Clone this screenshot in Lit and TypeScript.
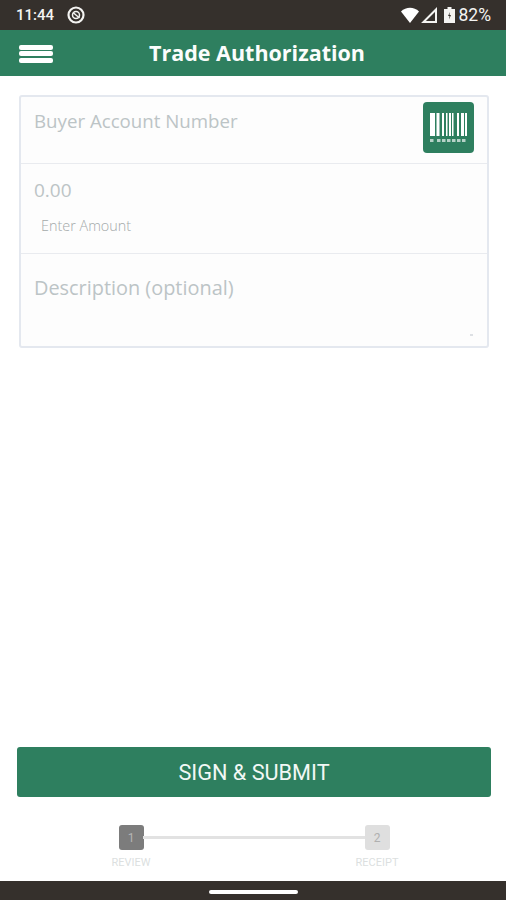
import {css, html, LitElement, svg} from "lit";
import {customElement} from "lit/decorators.js";

// barcode bars: [x, width]
const BARS: [number, number][] = [
  [0, 5], [6.5, 3], [12, 2], [16, 1.5], [19, 2], [22, 1.5], [27, 2], [31, 3], [35, 2],
];
const DOTS = [0, 7, 12, 17, 22, 27, 32];

@customElement("app-root")
export class AppRoot extends LitElement {
  static styles = css`
    :host {
      display: flex;
      flex-direction: column;
      width: 506px;
      height: 900px;
      background: #fff;
      font-family: "Open Sans", sans-serif;
      overflow: hidden;
    }

    .status {
      flex: none;
      height: 30px;
      background: #35302c;
      color: #f4f4f2;
      display: flex;
      align-items: center;
      padding: 0 15px 0 16px;
      font-family: Roboto, sans-serif;
      font-size: 15px;
      font-weight: 500;
    }

    .status .dnd {
      margin-left: 13px;
    }

    .status .right {
      margin-left: auto;
      display: flex;
      align-items: center;
    }

    .status .tri {
      margin-left: 2px;
    }

    .status .batt {
      margin-left: 7px;
    }

    .status .pct {
      margin-left: 4px;
      font-size: 17.5px;
      font-weight: 400;
    }

    .appbar {
      flex: none;
      height: 46px;
      background: #2e7f5f;
      display: flex;
      align-items: center;
      padding: 0 19px;
      box-sizing: border-box;
    }

    .burger {
      display: flex;
      flex-direction: column;
      gap: 1.5px;
      width: 34px;
      margin-top: 1px;
    }

    .burger span {
      height: 5px;
      background: #fff;
      border-radius: 2px;
    }

    .title {
      flex: 1;
      text-align: center;
      color: #fbfdfc;
      font-size: 21.5px;
      font-weight: 700;
      margin: -1px 0 0 -26px;
    }

    .card {
      flex: none;
      margin: 19px 17px 0 19px;
      height: 253px;
      box-sizing: border-box;
      border: 2px solid #e4e8ef;
      border-radius: 3px;
      background: #fdfdfd;
      display: flex;
      flex-direction: column;
    }

    .row {
      box-sizing: border-box;
      border-bottom: 1px solid #e9ebef;
      padding: 0 13px;
      color: #bcc4c6;
    }

    .row.account {
      height: 67px;
      display: flex;
      justify-content: space-between;
      padding-top: 5px;
      padding-right: 13px;
      font-size: 18.7px;
    }

    .row.account .label {
      margin-top: 6px;
    }

    .scan {
      width: 51px;
      height: 51px;
      background: #2e7f5f;
      border-radius: 4px;
      display: flex;
      align-items: center;
      justify-content: center;
    }

    .row.amount {
      height: 90px;
      padding-top: 13px;
      font-size: 19px;
    }

    .hint {
      margin: 13px 0 0 7px;
      color: #a4a9aa;
      font-size: 14.4px;
      font-weight: 300;
    }

    .row.desc {
      flex: 1;
      border-bottom: 0;
      padding-top: 20px;
      font-size: 19.9px;
      position: relative;
    }

    .grip {
      position: absolute;
      right: 14px;
      bottom: 10px;
      width: 3px;
      height: 2px;
      background: #dde0e4;
    }

    .spacer {
      flex: 1;
    }

    .submit {
      flex: none;
      margin: 0 15px 0 17px;
      height: 50px;
      border: 0;
      border-radius: 3px;
      background: #2e7f5f;
      color: #f2f8f5;
      font-family: Roboto, sans-serif;
      font-size: 21.7px;
      padding: 0;
    }

    .steps {
      flex: none;
      margin-top: 28px;
      height: 56px;
      padding: 0 97px 0 99px;
      display: grid;
      grid-template-columns: 64px 1fr 64px;
      grid-template-rows: 25px 1fr;
      justify-items: center;
      align-items: center;
    }

    .step {
      width: 25px;
      height: 25px;
      border-radius: 3px;
      display: flex;
      align-items: center;
      justify-content: center;
      font-family: Roboto, sans-serif;
      font-size: 12px;
    }

    .step.on {
      background: #7c7c7c;
      color: #b5b5b5;
    }

    .step.off {
      background: #dfdfdf;
      color: #b0b0b0;
    }

    .line {
      justify-self: stretch;
      height: 3px;
      margin: 0 -20px;
      background: #e2e2e2;
    }

    .cap {
      grid-row: 2;
      align-self: start;
      margin-top: 6px;
      color: #dcdfdf;
      font-family: Roboto, sans-serif;
      font-size: 11px;
    }

    .cap.second {
      grid-column: 3;
    }

    .nav {
      flex: none;
      height: 19px;
      background: #35302c;
      display: flex;
      align-items: center;
      justify-content: center;
    }

    .nav span {
      width: 89px;
      height: 4px;
      margin-top: 2px;
      background: #fff;
      border-radius: 2px;
    }
  `;

  private renderBarcode() {
    return html`
      <svg width="37" height="30" viewBox="0 0 37 30" fill="#fff">
        ${BARS.map(([x, w]) => svg`<rect x=${x} y="0" width=${w} height="23"></rect>`)}
        ${DOTS.map((x) => svg`<rect x=${x} y="26" width="3.500" height="3" opacity="0.65"></rect>`)}
      </svg>
    `;
  }

  render() {
    return html`
      <div class="status">
        <span>11:44</span>
        <svg class="dnd" width="18" height="18" viewBox="0 0 18 18" fill="none" stroke="#f4f4f2">
          <circle cx="9" cy="9" r="7.500" stroke-width="2.200"></circle>
          <circle cx="9" cy="9" r="3.500" stroke-width="1.500"></circle>
          <path d="M6 6.500 12.500 12" stroke-width="1.500"></path>
        </svg>
        <div class="right">
          <svg width="18" height="16" viewBox="0 0 18 16">
            <path d="M0 4.500C5-.5 13-.5 18 4.500L9 16Z" fill="#fff"></path>
          </svg>
          <svg class="tri" width="16" height="16" viewBox="0 0 16 16" fill="none" stroke="#f4f4f2" stroke-width="2">
            <path d="M15 2.500V15H2.500Z"></path>
          </svg>
          <svg class="batt" width="11" height="16" viewBox="0 0 11 16">
            <path d="M3.500 0H7.500V2H11V16H0V2H3.500Z" fill="#f4f4f2"></path>
            <path d="M6 5 4 9H5.500L5 12.500 7 8H5.500Z" fill="#35302c"></path>
          </svg>
          <span class="pct">82%</span>
        </div>
      </div>

      <div class="appbar">
        <div class="burger"><span></span><span></span><span></span></div>
        <div class="title">Trade Authorization</div>
      </div>

      <div class="card">
        <div class="row account">
          <div class="label">Buyer Account Number</div>
          <div class="scan">${this.renderBarcode()}</div>
        </div>
        <div class="row amount">
          <div>0.00</div>
          <div class="hint">Enter Amount</div>
        </div>
        <div class="row desc">Description (optional)<span class="grip"></span></div>
      </div>

      <div class="spacer"></div>

      <button class="submit">SIGN &amp; SUBMIT</button>

      <div class="steps">
        <div class="step on">1</div>
        <div class="line"></div>
        <div class="step off">2</div>
        <div class="cap">REVIEW</div>
        <div class="cap second">RECEIPT</div>
      </div>

      <div class="nav"><span></span></div>
    `;
  }
}
